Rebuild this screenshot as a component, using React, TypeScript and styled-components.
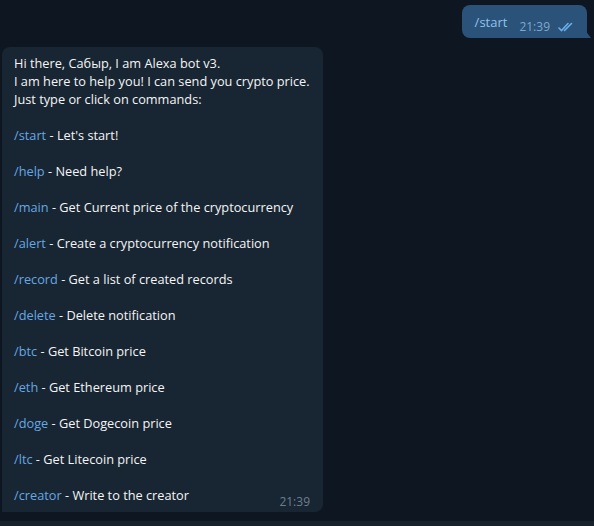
import React from "react";
import styled, { createGlobalStyle } from "styled-components";

const Global = createGlobalStyle`
  html, body { margin: 0; padding: 0; background: #0e1621; }
  body { font-family: "Open Sans", "Noto Sans", sans-serif; -webkit-font-smoothing: antialiased; }
  * { box-sizing: border-box; }
`;

const Page = styled.div`
  width: 594px;
  height: 526px;
  display: flex;
  flex-direction: column;
  background: #0e1621;
  overflow: hidden;
`;

const Chat = styled.div`
  flex: 1;
  display: flex;
  flex-direction: column;
  padding: 5px 7px 0 2px;
  gap: 9px;
`;

const OutRow = styled.div`
  display: flex;
  justify-content: flex-end;
`;

const OutBubble = styled.div`
  position: relative;
  background: #2b5278;
  border-radius: 8px 8px 0 8px;
  height: 33px;
  padding: 8px 12px 0 13px;
  display: flex;
  align-items: flex-start;
  gap: 12px;
  font-size: 13px;
  &::after {
    content: "";
    position: absolute;
    right: -4px;
    bottom: 0;
    width: 6px;
    height: 8px;
    background: #2b5278;
    clip-path: polygon(0 0, 0 100%, 100% 100%);
  }
`;

const OutCommand = styled.span`
  color: #8ec3ef;
  line-height: 18px;
`;

const OutMeta = styled.span`
  display: flex;
  align-items: center;
  gap: 8px;
  color: #7da8d3;
  font-size: 12px;
  line-height: 16px;
  margin-top: 6px;
`;

const InBubble = styled.div`
  width: 321px;
  background: #182533;
  border-radius: 8px 8px 8px 0;
  padding: 7px 12px 8px 12px;
  color: #f5f5f5;
  font-size: 12.75px;
  line-height: 18px;
  white-space: nowrap;
`;

const Line = styled.div<{ $gap?: boolean }>`
  min-height: 18px;
  margin-top: ${(p) => (p.$gap ? "18px" : "0")};
`;

const LastLine = styled(Line)`
  display: flex;
  justify-content: space-between;
  align-items: flex-end;
`;

const Cmd = styled.span`
  color: #66a8e2;
`;

const Time = styled.span`
  color: #6d7f8f;
  font-size: 12px;
  line-height: 14px;
  margin-bottom: -5px;
  margin-right: 1px;
`;

const Footer = styled.div`
  height: 5px;
  background: #17212b;
`;

const Checks = () => (
  <svg width="17" height="10" viewBox="0 0 17 10" fill="none" stroke="#68b0ec" strokeWidth="1.6" strokeLinecap="round">
    <path d="M1 6 L3.5 8.5 L10 1.5" />
    <path d="M6.5 8.5 L13.5 1.5" />
  </svg>
);

const commands: [string, string][] = [
  ["/start", "Let's start!"],
  ["/help", "Need help?"],
  ["/main", "Get Current price of the cryptocurrency"],
  ["/alert", "Create a cryptocurrency notification"],
  ["/record", "Get a list of created records"],
  ["/delete", "Delete notification"],
  ["/btc", "Get Bitcoin price"],
  ["/eth", "Get Ethereum price"],
  ["/doge", "Get Dogecoin price"],
  ["/ltc", "Get Litecoin price"],
];

export default function App() {
  return (
    <Page>
      <Global />
      <Chat>
        <OutRow>
          <OutBubble>
            <OutCommand>/start</OutCommand>
            <OutMeta>
              21:39
              <Checks />
            </OutMeta>
          </OutBubble>
        </OutRow>
        <InBubble>
          <Line>Hi there, Сабыр, I am Alexa bot v3.</Line>
          <Line>I am here to help you! I can send you crypto price.</Line>
          <Line>Just type or click on commands:</Line>
          {commands.map(([c, d]) => (
            <Line key={c} $gap>
              <Cmd>{c}</Cmd> - {d}
            </Line>
          ))}
          <LastLine $gap>
            <span>
              <Cmd>/creator</Cmd> - Write to the creator
            </span>
            <Time>21:39</Time>
          </LastLine>
        </InBubble>
      </Chat>
      <Footer />
    </Page>
  );
}
